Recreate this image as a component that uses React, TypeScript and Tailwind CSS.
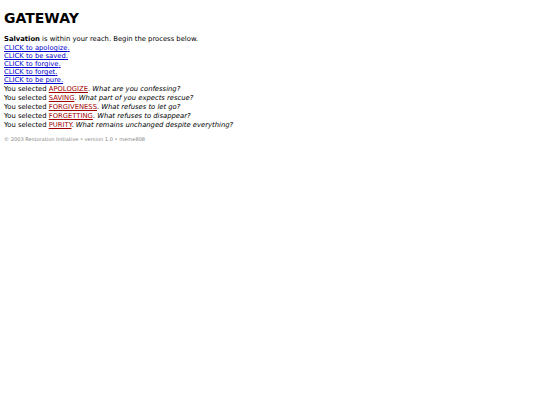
import React from 'react';

const actions = ['apologize', 'be saved', 'forgive', 'forget', 'be pure'];

const selections = [
  { word: 'APOLOGIZE', question: 'What are you confessing?' },
  { word: 'SAVING', question: 'What part of you expects rescue?' },
  { word: 'FORGIVENESS', question: 'What refuses to let go?' },
  { word: 'FORGETTING', question: 'What refuses to disappear?' },
  { word: 'PURITY', question: 'What remains unchanged despite everything?' },
];

export default function App() {
  return (
    <div className="min-h-screen bg-white px-[4px] pt-[8px] text-black font-['DejaVu_Sans',sans-serif]">
      <h1 className="text-[14px] font-bold leading-[20px]">GATEWAY</h1>

      <div className="mt-[7px] text-[6.8px]">
        <p className="leading-[9px]">
          <b>Salvation</b> is within your reach. Begin the process below.
        </p>
        <div className="flex flex-col">
          {actions.map((a) => (
            <a key={a} href="#" className="leading-[8px] text-[#0000cc] underline">
              CLICK to {a}.
            </a>
          ))}
        </div>
        <div className="mt-[1px] flex flex-col">
          {selections.map((s) => (
            <p key={s.word} className="leading-[9px]">
              You selected <a href="#" className="text-[#a00000] underline">{s.word}</a>.{' '}
              <i>{s.question}</i>
            </p>
          ))}
        </div>
      </div>

      <p className="mt-[5px] text-[5.1px] leading-[8px] text-[#888888]">
        © 2003 Restoration Initiative • version 1.0 • meme808
      </p>
    </div>
  );
}
